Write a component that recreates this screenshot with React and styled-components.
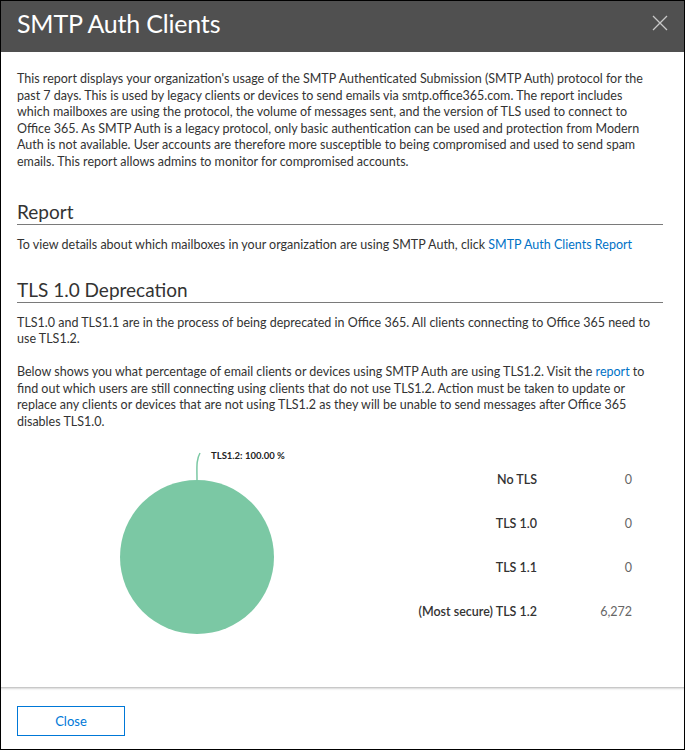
import React from 'react';
import styled, { createGlobalStyle } from 'styled-components';

const GlobalStyle = createGlobalStyle`
  html, body {
    margin: 0;
    padding: 0;
    background: #fff;
  }
  body {
    font-family: Lato, "Open Sans", sans-serif;
    color: #333;
  }
`

const Dialog = styled.div`
  width: 685px;
  height: 750px;
  box-sizing: border-box;
  border: 1px solid #000;
  display: flex;
  flex-direction: column;
  background: #fff;
  overflow: hidden;
`

const Header = styled.div`
  height: 51px;
  flex-shrink: 0;
  box-sizing: border-box;
  background: #505050;
  display: flex;
  align-items: center;
  justify-content: space-between;
  padding: 0 14px 8px 16px;
`

const Title = styled.h1`
  margin: 0;
  font-size: 25px;
  font-weight: 400;
  color: #fff;
  letter-spacing: -0.2px;
`

const CloseIcon = styled.button`
  width: 20px;
  height: 20px;
  padding: 0;
  border: none;
  background: transparent;
  cursor: pointer;
  display: flex;
  align-items: center;
  justify-content: center;
`

const Content = styled.div`
  flex: 1;
  padding: 19px 21px 0 16px;
`

const Text = styled.p`
  margin: 0 0 ${p => p.gap || 0}px;
  font-size: 12.5px;
  line-height: 16.5px;
  color: #333;
`

const Link = styled.a`
  color: #0072c6;
  text-decoration: none;
  cursor: pointer;
`

const SectionTitle = styled.h2`
  margin: ${p => p.top}px 0 12px;
  padding-bottom: 1px;
  font-size: 19px;
  font-weight: 400;
  color: #333;
  border-bottom: 1px solid #7a7a7a;
`

const Chart = styled.div`
  display: flex;
  height: 240px;
  margin-top: 10px;
`

const Legend = styled.div`
  display: grid;
  grid-template-columns: 139px 95px;
  grid-auto-rows: 44px;
  align-items: center;
  margin-top: 17px;
  align-self: flex-start;
`

const LegendLabel = styled.span`
  text-align: right;
  font-size: 12.5px;
  font-weight: 600;
  color: #333;
`

const LegendValue = styled.span`
  text-align: right;
  font-size: 12.5px;
  color: #666;
`

const Footer = styled.div`
  height: 62px;
  flex-shrink: 0;
  border-top: 1px solid #c8c8c8;
  box-shadow: inset 0 2px 2px -1px #d8d8d8;
  padding: 18px 16px 0;
  box-sizing: border-box;
`

const Button = styled.button`
  width: 108px;
  height: 30px;
  border: 1px solid #0078d7;
  background: #fff;
  color: #0078d7;
  font-family: Lato, "Open Sans", sans-serif;
  font-size: 13px;
  cursor: pointer;
`

const legend = [
  { label: 'No TLS', value: '0' },
  { label: 'TLS 1.0', value: '0' },
  { label: 'TLS 1.1', value: '0' },
  { label: '(Most secure) TLS 1.2', value: '6,272' },
]

const Pie = () => (
  <svg width="381" height="240" viewBox="0 0 381 240">
    <path d="M180 40 C180 28 179 20 183 13" stroke="#7bc8a4" strokeWidth="1.5" fill="none" />
    <text x="194" y="19" fontSize="9.5" fontWeight="700" fill="#222" fontFamily="Lato, 'Open Sans', sans-serif">
      TLS1.2: 100.00 %
    </text>
    <circle cx="180" cy="117" r="77" fill="#7bc8a4" />
  </svg>
)

export default function App() {
  return (
    <>
      <GlobalStyle />
      <Dialog>
        <Header>
          <Title>SMTP Auth Clients</Title>
          <CloseIcon aria-label="Close">
            <svg width="16" height="16" viewBox="0 0 16 16">
              <path d="M1 1 L15 15 M15 1 L1 15" stroke="#c8c8c8" strokeWidth="1.3" />
            </svg>
          </CloseIcon>
        </Header>
        <Content>
          <Text>
            This report displays your organization's usage of the SMTP Authenticated Submission (SMTP Auth) protocol for the<br />
            past 7 days. This is used by legacy clients or devices to send emails via smtp.office365.com. The report includes<br />
            which mailboxes are using the protocol, the volume of messages sent, and the version of TLS used to connect to<br />
            Office 365. As SMTP Auth is a legacy protocol, only basic authentication can be used and protection from Modern<br />
            Auth is not available. User accounts are therefore more susceptible to being compromised and used to send spam<br />
            emails. This report allows admins to monitor for compromised accounts.
          </Text>

          <SectionTitle top={30}>Report</SectionTitle>
          <Text>
            To view details about which mailboxes in your organization are using SMTP Auth, click <Link>SMTP Auth Clients Report</Link>
          </Text>

          <SectionTitle top={24}>TLS 1.0 Deprecation</SectionTitle>
          <Text gap={16.5}>
            TLS1.0 and TLS1.1 are in the process of being deprecated in Office 365. All clients connecting to Office 365 need to<br />
            use TLS1.2.
          </Text>
          <Text>
            Below shows you what percentage of email clients or devices using SMTP Auth are using TLS1.2. Visit the <Link>report</Link> to<br />
            find out which users are still connecting using clients that do not use TLS1.2. Action must be taken to update or<br />
            replace any clients or devices that are not using TLS1.2 as they will be unable to send messages after Office 365<br />
            disables TLS1.0.
          </Text>

          <Chart>
            <Pie />
            <Legend>
              {legend.map(item => (
                <React.Fragment key={item.label}>
                  <LegendLabel>{item.label}</LegendLabel>
                  <LegendValue>{item.value}</LegendValue>
                </React.Fragment>
              ))}
            </Legend>
          </Chart>
        </Content>
        <Footer>
          <Button>Close</Button>
        </Footer>
      </Dialog>
    </>
  );
}
